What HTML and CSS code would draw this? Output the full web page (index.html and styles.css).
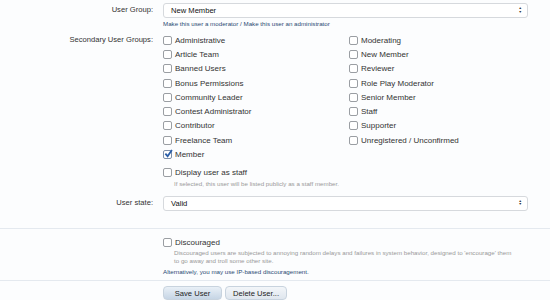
FILE: index.html
```html
<!DOCTYPE html>
<html lang="en">
<head>
    <meta charset="UTF-8">
    <title>Edit User</title>
    <link rel="stylesheet" href="styles.css">
</head>
<body>
<form class="xenForm">
    <div class="ctrlUnit">
        <div class="label">User Group:</div>
        <div class="ctrl">
            <div class="select"><span>New Member</span><span class="arrows">&#9650;<br>&#9660;</span></div>
            <div class="links"><a href="#">Make this user a moderator</a> / <a href="#">Make this user an administrator</a></div>
        </div>
    </div>

    <div class="ctrlUnit groups">
        <div class="label">Secondary User Groups:</div>
        <div class="ctrl">
            <ul class="checkGrid">
                <li><span class="box"></span>Administrative</li>
                <li><span class="box"></span>Moderating</li>
                <li><span class="box"></span>Article Team</li>
                <li><span class="box"></span>New Member</li>
                <li><span class="box"></span>Banned Users</li>
                <li><span class="box"></span>Reviewer</li>
                <li><span class="box"></span>Bonus Permissions</li>
                <li><span class="box"></span>Role Play Moderator</li>
                <li><span class="box"></span>Community Leader</li>
                <li><span class="box"></span>Senior Member</li>
                <li><span class="box"></span>Contest Administrator</li>
                <li><span class="box"></span>Staff</li>
                <li><span class="box"></span>Contributor</li>
                <li><span class="box"></span>Supporter</li>
                <li><span class="box"></span>Freelance Team</li>
                <li><span class="box"></span>Unregistered / Unconfirmed</li>
                <li><span class="box checked"><svg viewBox="0 0 10 10" width="9" height="9"><path d="M1.5 5.2 L4 8 L8.8 1.2" fill="none" stroke="#2a5ea8" stroke-width="2"/></svg></span>Member</li>
            </ul>
        </div>
    </div>

    <div class="ctrlUnit staff">
        <div class="label"></div>
        <div class="ctrl">
            <div class="check"><span class="box"></span>Display user as staff</div>
            <p class="hint">If selected, this user will be listed publicly as a staff member.</p>
        </div>
    </div>

    <div class="ctrlUnit state">
        <div class="label">User state:</div>
        <div class="ctrl">
            <div class="select"><span>Valid</span><span class="arrows">&#9650;<br>&#9660;</span></div>
        </div>
    </div>

    <fieldset class="section">
        <div class="ctrlUnit">
            <div class="label"></div>
            <div class="ctrl">
                <div class="check"><span class="box"></span>Discouraged</div>
                <p class="hint">Discouraged users are subjected to annoying random delays and failures in system behavior, designed to 'encourage' them to go away and troll some other site.</p>
                <div class="links alt"><a href="#">Alternatively, you may use IP-based discouragement.</a></div>
            </div>
        </div>
    </fieldset>

    <div class="ctrlUnit submit">
        <div class="label"></div>
        <div class="ctrl buttons">
            <button type="button" class="button primary">Save User</button>
            <button type="button" class="button delete">Delete User...</button>
        </div>
    </div>
</form>
</body>
</html>
```

FILE: styles.css
```css
body { margin: 0; background: #fcfdfe; font-family: "Liberation Sans", Arial, sans-serif; font-size: 8px; color: #222; }
.xenForm { padding-top: 3px; }
.ctrlUnit { display: flex; }
.label { width: 153px; flex: none; text-align: right; padding-right: 10px; color: #333; line-height: 14px; font-size: 7.6px; }
.ctrl { flex: 1; padding-right: 22px; }
.select { display: flex; justify-content: space-between; align-items: center; height: 13px; border: 1px solid #d6d9dd; border-radius: 3px; background: #fff; padding: 0 5px 0 7px; font-size: 7.6px; color: #111; }
.arrows { font-size: 3.5px; line-height: 3.5px; color: #333; }
.links { font-size: 6.2px; margin-top: 2px; color: #2b4a73; }
.links a { color: #2b4a73; text-decoration: none; }
.groups { margin-top: 6px; }
.checkGrid { list-style: none; margin: 0; padding: 0; display: grid; grid-template-columns: 186px 1fr; }
.checkGrid li, .check { display: flex; align-items: center; height: 14.3px; color: #333; font-size: 8px; }
.box { width: 7px; height: 7px; border: 1px solid #9a9ea3; border-radius: 2px; background: #fff; margin-right: 3px; flex: none; position: relative; }
.box.checked { border-color: #7d8fa8; }
.box svg { position: absolute; left: 0; top: -2px; }
.staff { margin-top: 4px; }
.hint { margin: 0 0 0 11px; font-size: 6.2px; color: #999; line-height: 8px; }
.state { margin-top: 8px; }
.section { border: none; border-top: 1px solid #e4e9ef; border-bottom: 1px solid #e4e9ef; margin: 17px 0 0; padding: 6px 0 5px; }
.section .hint { margin-top: 0; padding-right: 10px; }
.alt { margin-top: 3px; }
.submit { margin-top: 5px; }
.buttons { display: flex; gap: 3px; }
.button { height: 14px; width: 59px; padding: 0; border: 1px solid #c8d3de; border-radius: 4px; background: linear-gradient(#f3f6f9, #dfe6ee); font-family: inherit; font-size: 7.6px; color: #222; }
.button.primary { background: linear-gradient(#e9f0f7, #c6d5e5); }
.button.delete { width: 62px; }
```
